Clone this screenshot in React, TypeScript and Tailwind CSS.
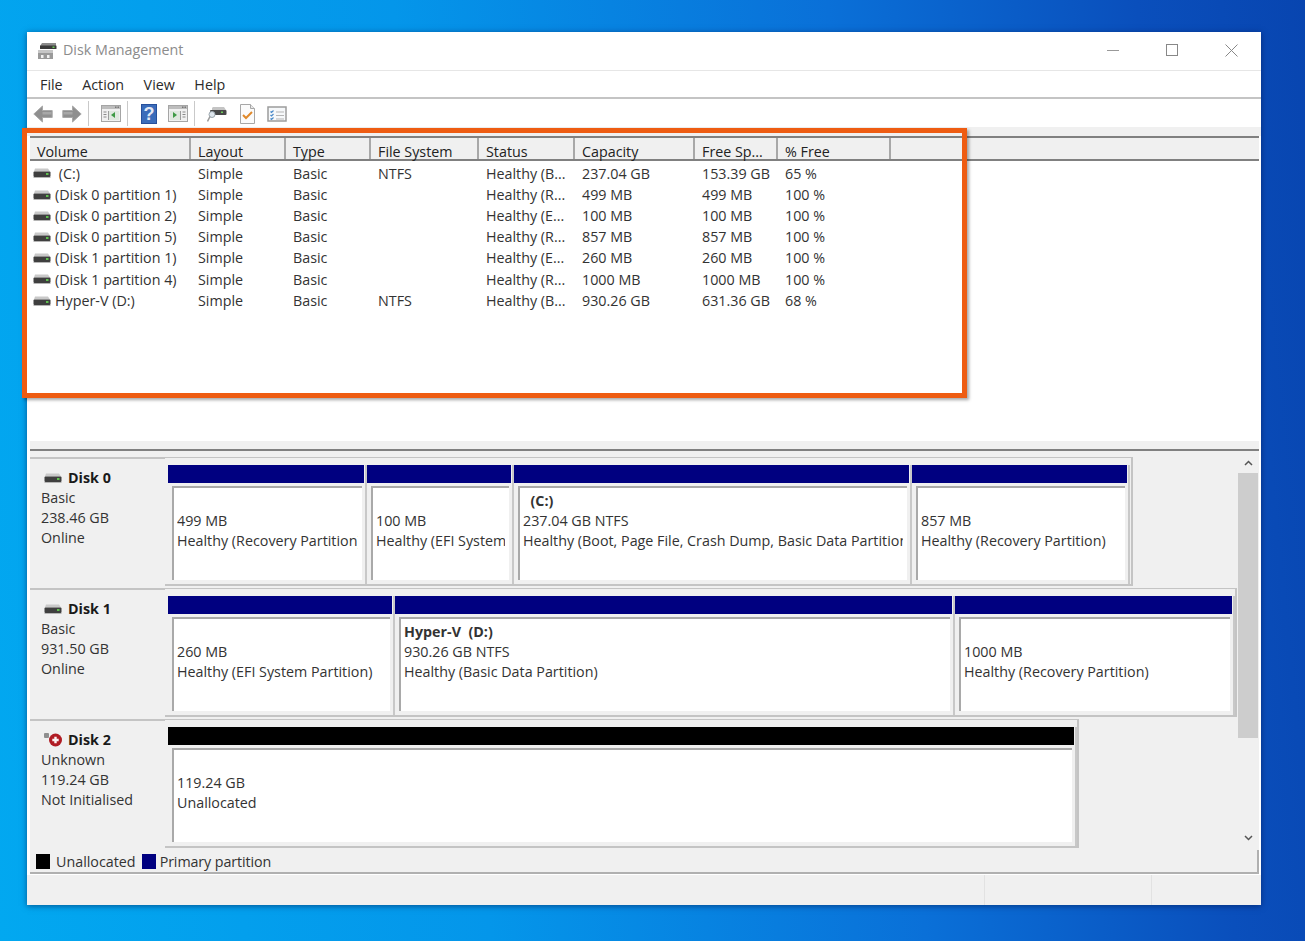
const columns = [
  { label: "Volume", width: 161 },
  { label: "Layout", width: 95 },
  { label: "Type", width: 85 },
  { label: "File System", width: 108 },
  { label: "Status", width: 96 },
  { label: "Capacity", width: 120 },
  { label: "Free Sp...", width: 83 },
  { label: "% Free", width: 113 },
];

const volumes = [
  ["\u00a0(C:)", "Simple", "Basic", "NTFS", "Healthy (B...", "237.04 GB", "153.39 GB", "65 %"],
  ["(Disk 0 partition 1)", "Simple", "Basic", "", "Healthy (R...", "499 MB", "499 MB", "100 %"],
  ["(Disk 0 partition 2)", "Simple", "Basic", "", "Healthy (E...", "100 MB", "100 MB", "100 %"],
  ["(Disk 0 partition 5)", "Simple", "Basic", "", "Healthy (R...", "857 MB", "857 MB", "100 %"],
  ["(Disk 1 partition 1)", "Simple", "Basic", "", "Healthy (E...", "260 MB", "260 MB", "100 %"],
  ["(Disk 1 partition 4)", "Simple", "Basic", "", "Healthy (R...", "1000 MB", "1000 MB", "100 %"],
  ["Hyper-V (D:)", "Simple", "Basic", "NTFS", "Healthy (B...", "930.26 GB", "631.36 GB", "68 %"],
];

const disks = [
  {
    name: "Disk 0",
    info: ["Basic", "238.46 GB", "Online"],
    icon: "drive",
    frame: 968,
    parts: [
      { width: 199, title: "", lines: ["499 MB", "Healthy (Recovery Partition)"] },
      { width: 147, title: "", lines: ["100 MB", "Healthy (EFI System Partition)"] },
      { width: 398, title: "\u00a0\u00a0(C:)", lines: ["237.04 GB NTFS", "Healthy (Boot, Page File, Crash Dump, Basic Data Partition)"] },
      { width: 218, title: "", lines: ["857 MB", "Healthy (Recovery Partition)"] },
    ],
  },
  {
    name: "Disk 1",
    info: ["Basic", "931.50 GB", "Online"],
    icon: "drive",
    frame: 1072,
    parts: [
      { width: 227, title: "", lines: ["260 MB", "Healthy (EFI System Partition)"] },
      { width: 560, title: "Hyper-V  (D:)", lines: ["930.26 GB NTFS", "Healthy (Basic Data Partition)"] },
      { width: 280, title: "", lines: ["1000 MB", "Healthy (Recovery Partition)"] },
    ],
  },
  {
    name: "Disk 2",
    info: ["Unknown", "119.24 GB", "Not Initialised"],
    icon: "error",
    frame: 914,
    parts: [{ width: 909, title: "", lines: ["119.24 GB", "Unallocated"], black: true }],
  },
];

function SmallDrive({ className }: { className?: string }) {
  return (
    <svg className={className} width="18" height="10" viewBox="0 0 18 10">
      <path d="M2 0.5h13l2 3H1z" fill="#c9c9c9" />
      <rect x="0.5" y="3.5" width="17" height="5.5" rx="1" fill="#3f3f3f" />
      <rect x="13" y="5" width="2.5" height="2" fill="#5fc04f" />
      <rect x="0.5" y="9" width="17" height="1" fill="#b5b5b5" />
    </svg>
  );
}

function ErrorDrive() {
  return (
    <svg width="19" height="16" viewBox="0 0 19 16">
      <rect x="0" y="1" width="5" height="5" rx="1" fill="#8f8f8f" />
      <circle cx="11.5" cy="8" r="6.5" fill="#b01c24" />
      <path d="M10.300 4.800h2.400v2h2v2.400h-2v2h-2.400v-2h-2V6.800h2z" fill="#fbf3f3" />
    </svg>
  );
}

function AppIcon() {
  return (
    <svg width="20" height="19" viewBox="0 0 20 19">
      <path d="M3 5l2-3h14v3z" fill="#8b8b8b" />
      <rect x="3" y="4.500" width="16.500" height="3.500" rx="0.500" fill="#3a3a3a" />
      <rect x="15.500" y="5.500" width="2" height="1.500" fill="#6ecb5a" />
      <path d="M1 10h15v8H1z" fill="#9a9a9a" />
      <rect x="1" y="9" width="15" height="3" fill="#c6c6c6" />
      <rect x="4" y="14" width="2.500" height="3" fill="#f2f2f2" />
      <rect x="10" y="14" width="2.500" height="3" fill="#f2f2f2" />
    </svg>
  );
}

function ArrowIcon({ flip }: { flip?: boolean }) {
  return (
    <svg width="20" height="20" viewBox="0 0 20 20" className={flip ? "-scale-x-100" : ""}>
      <path d="M0.800 10L9.500 2v4.500h9.700v7H9.500V18z" fill="#8f8f8f" stroke="#a9a9a9" strokeWidth="1" />
      <path d="M9.500 8h9v2.500h-9z" fill="#a7a7a7" />
    </svg>
  );
}

function PaneIcon({ mirror }: { mirror?: boolean }) {
  return (
    <svg width="20" height="17" viewBox="0 0 20 17">
      <rect x="0.500" y="0.500" width="19" height="16" fill="#f0f0f0" stroke="#a5a5a5" />
      <rect x="1" y="1" width="18" height="3" fill="#bdbdbd" />
      <rect x="14" y="1.500" width="1.500" height="1.500" fill="#777" />
      <rect x="16.500" y="1.500" width="1.500" height="1.500" fill="#777" />
      {mirror ? (
        <>
          <rect x="2" y="6" width="10" height="9" fill="#dfe8df" />
          <path d="M5 7l4 3-4 3z" fill="#3e9a45" />
          <rect x="12" y="6" width="1" height="9" fill="#9c9c9c" />
          <path d="M14.500 7h3M14.500 9.500h3M14.500 12h3" stroke="#8a8a8a" />
        </>
      ) : (
        <>
          <path d="M2.500 7h3M2.500 9.500h3M2.500 12h3" stroke="#8a8a8a" />
          <rect x="7" y="6" width="1" height="9" fill="#9c9c9c" />
          <rect x="8" y="6" width="10" height="9" fill="#dfe8df" />
          <path d="M14 7l-4 3 4 3z" fill="#3e9a45" />
        </>
      )}
    </svg>
  );
}

function HelpIcon() {
  return (
    <svg width="16" height="20" viewBox="0 0 16 20">
      <rect width="16" height="20" fill="#26509c" />
      <rect x="1" y="1" width="14" height="18" fill="#3a6cba" />
      <text x="8" y="16" textAnchor="middle" fontSize="18" fontWeight="700" fill="#e3e9f4" fontFamily="Liberation Sans, sans-serif">?</text>
    </svg>
  );
}

function SearchDriveIcon() {
  return (
    <svg width="20" height="18" viewBox="0 0 20 18">
      <path d="M5 3l1-1h11l2 3H5z" fill="#c4c4c4" />
      <rect x="3" y="5" width="16.500" height="5" rx="1" fill="#474747" />
      <rect x="14" y="6.500" width="2" height="1.500" fill="#6ecb5a" />
      <circle cx="5" cy="9.500" r="3" fill="#dfe7ee" stroke="#9aa5ad" />
      <path d="M3 11.500L0.500 16.500" stroke="#9a9a9a" strokeWidth="1.500" />
    </svg>
  );
}

function CheckDocIcon() {
  return (
    <svg width="15" height="20" viewBox="0 0 15 20">
      <path d="M0.500 0.500h10l4 4v15H0.500z" fill="#fbfbfb" stroke="#a7a7a7" />
      <path d="M10.500 0.500v4h4" fill="#e8e8e8" stroke="#a7a7a7" />
      <path d="M3 11l3 3 6-6" fill="none" stroke="#e0892b" strokeWidth="2" />
    </svg>
  );
}

function ListIcon() {
  return (
    <svg width="20" height="16" viewBox="0 0 20 16">
      <rect x="1" y="1" width="18" height="14" fill="#f6f8fa" stroke="#9c9c9c" strokeWidth="1.500" />
      <path d="M3.500 5.500l1 1 2-2M3.500 9l1 1 2-2M3.500 12.500l1 1 2-2" fill="none" stroke="#4a8ac9" strokeWidth="1.200" />
      <path d="M9 6h8M9 9.500h8M9 13h8" stroke="#b5b5b5" />
    </svg>
  );
}

function ToolbarSep() {
  return <div className="w-px h-[25px] bg-[#c9c9c9]" />;
}

function Partition({ part }: { part: any }) {
  return (
    <div className="shrink-0 h-[119px] border-r-2 border-[#c8c8c8] pr-px" style={{ width: part.width }}>
      <div className={part.black ? "h-[18px] bg-black" : "h-[18px] bg-[#000080]"} />
      <div className="ml-1 mt-[3px] h-[94px] mr-[2px] bg-white border-l-2 border-t-2 border-[#a9a9a9] pl-[3px] pr-1 pt-[3px] leading-5">
        <div className="whitespace-nowrap overflow-hidden">
          <div className="font-bold h-5 whitespace-pre">{part.title}</div>
          {part.lines.map((line: string) => (
            <div key={line}>{line}</div>
          ))}
        </div>
      </div>
    </div>
  );
}

function DiskRow({ disk }: { disk: any }) {
  return (
    <div className="flex h-[129px] mb-[2px]">
      <div className="w-[135px] shrink-0 border-t-2 border-[#c4c4c4] pl-[11px] pt-[9px] leading-5">
        <div className="flex items-center h-5">
          <div className="w-[27px] pl-[3px]">
            {disk.icon === "error" ? <ErrorDrive /> : <SmallDrive />}
          </div>
          <span className="font-bold text-[#1a1a1a]">{disk.name}</span>
        </div>
        {disk.info.map((line: string) => (
          <div key={line}>{line}</div>
        ))}
      </div>
      <div className="border-r-2 border-b-2 border-t border-[#c4c4c4] pl-[3px] pt-[7px] flex" style={{ width: disk.frame }}>
        {disk.parts.map((part: any) => (
          <Partition key={part.lines[0]} part={part} />
        ))}
      </div>
    </div>
  );
}

export default function App() {
  return (
    <div
      className="h-[941px] overflow-hidden pl-[27px] pt-[32px] bg-[linear-gradient(84deg,#02a8f0_0%,#0496ea_35%,#0a70d8_66%,#0a4fbc_88%,#0845b0_100%)] text-[14.3px] text-[#333333]"
      style={{ fontFamily: '"Open Sans", "Noto Sans", sans-serif' }}
    >
      <div className="relative w-[1234px] h-[873px] bg-white flex flex-col shadow-[0_1px_6px_rgba(0,20,70,0.55)]">
        {/* title bar */}
        <div className="h-[39px] flex items-center border-b border-[#e6e6e6] shrink-0 pl-[10px] pb-[2px]">
          <AppIcon />
          <span className="ml-[6px] text-[#8c8c8c]">Disk Management</span>
          <div className="ml-auto flex items-center pr-[23px]">
            <div className="w-3 h-px bg-[#999999]" />
            <div className="ml-[47px] w-3 h-3 border border-[#888888]" />
            <svg className="ml-[47px]" width="13" height="13" viewBox="0 0 13 13">
              <path d="M0.500 0.500l12 12M12.500 0.500l-12 12" stroke="#888888" fill="none" />
            </svg>
          </div>
        </div>
        {/* menu */}
        <div className="h-[28px] flex items-center gap-[19.500px] border-b-2 border-[#c4c4c4] shrink-0 pl-[13px] pt-[2px] text-[#2b2b2b]">
          <span>File</span>
          <span>Action</span>
          <span>View</span>
          <span>Help</span>
        </div>
        {/* toolbar */}
        <div className="h-[28px] flex items-center shrink-0 pl-[6px] pt-px">
          <ArrowIcon />
          <div className="w-[9px]" />
          <ArrowIcon flip />
          <div className="w-[6px]" />
          <ToolbarSep />
          <div className="w-3" />
          <PaneIcon />
          <div className="w-[6px]" />
          <ToolbarSep />
          <div className="w-[13px]" />
          <HelpIcon />
          <div className="w-[11px]" />
          <PaneIcon mirror />
          <div className="w-[6px]" />
          <ToolbarSep />
          <div className="w-3" />
          <SearchDriveIcon />
          <div className="w-[13px]" />
          <CheckDocIcon />
          <div className="w-3" />
          <ListIcon />
        </div>
        {/* volume list */}
        <div className="h-[9px] bg-[#f0f0f0] shrink-0" />
        <div className="flex-1 flex flex-col pl-[3px] pr-[2px] min-h-0 bg-white">
          <div className="h-[25px] flex shrink-0 bg-[#f0f0f0] border-y-2 border-[#808080] leading-[27px] text-[#222222]">
            {columns.map((col) => (
              <div key={col.label} className="shrink-0 pl-[7px] border-r-2 border-[#a8a8a8]" style={{ width: col.width }}>
                {col.label}
              </div>
            ))}
          </div>
          <div className="h-[280px] shrink-0 pt-[1.800px]">
            {volumes.map((row) => (
              <div key={row[0]} className="flex h-[21.200px] items-center">
                {row.map((cell, i) => (
                  <div key={i} className="shrink-0 pl-[7px] flex items-center whitespace-nowrap" style={{ width: columns[i].width }}>
                    {i === 0 && <SmallDrive className="-ml-[4px] mr-[4px]" />}
                    {cell}
                  </div>
                ))}
              </div>
            ))}
          </div>
          {/* splitter */}
          <div className="h-[10px] shrink-0 bg-[#f0f0f0] border-b-2 border-[#808080]" />
          {/* graphical view */}
          <div className="relative h-[399px] shrink-0 bg-[#f0f0f0] overflow-hidden pt-[6px]">
            {disks.map((disk) => (
              <DiskRow key={disk.name} disk={disk} />
            ))}
            <div className="absolute right-px top-0 bottom-0 w-[20px] flex flex-col items-center justify-between bg-[#f0f0f0]">
              <svg className="mt-[9px]" width="9" height="6" viewBox="0 0 9 6">
                <path d="M1 5l3.500-3.500L8 5" stroke="#555555" strokeWidth="1.500" fill="none" />
              </svg>
              <div className="absolute left-0 top-[22px] w-[20px] h-[265px] bg-[#cdcdcd]" />
              <svg className="mb-[9px]" width="9" height="6" viewBox="0 0 9 6">
                <path d="M1 1l3.500 3.500L8 1" stroke="#555555" strokeWidth="1.500" fill="none" />
              </svg>
            </div>
          </div>
          {/* legend */}
          <div className="h-[24px] shrink-0 bg-[#f0f0f0] border-b-2 border-r-2 border-[#b0b0b0] flex items-center pl-[6px] pt-px">
            <div className="w-[14px] h-[15px] bg-black" />
            <span className="ml-[6px]">Unallocated</span>
            <div className="ml-[6px] w-[14px] h-[15px] bg-[#000080]" />
            <span className="ml-[4px] tracking-[-0.1px]">Primary partition</span>
          </div>
        </div>
        {/* status bar */}
        <div className="h-[31px] shrink-0 mt-px bg-[#f0f0f0] flex border-t border-white">
          <div className="w-[958px] border-r border-[#e2e2e2]" />
          <div className="w-[167px] border-r border-[#e2e2e2]" />
        </div>
        {/* orange callout drawn over the list */}
        <div className="absolute left-[-5px] top-[96px] w-[945px] h-[270px] border-[5px] border-[#ee5c12] shadow-[2px_2px_3px_rgba(0,0,0,0.35)] pointer-events-none" />
      </div>
    </div>
  );
}
